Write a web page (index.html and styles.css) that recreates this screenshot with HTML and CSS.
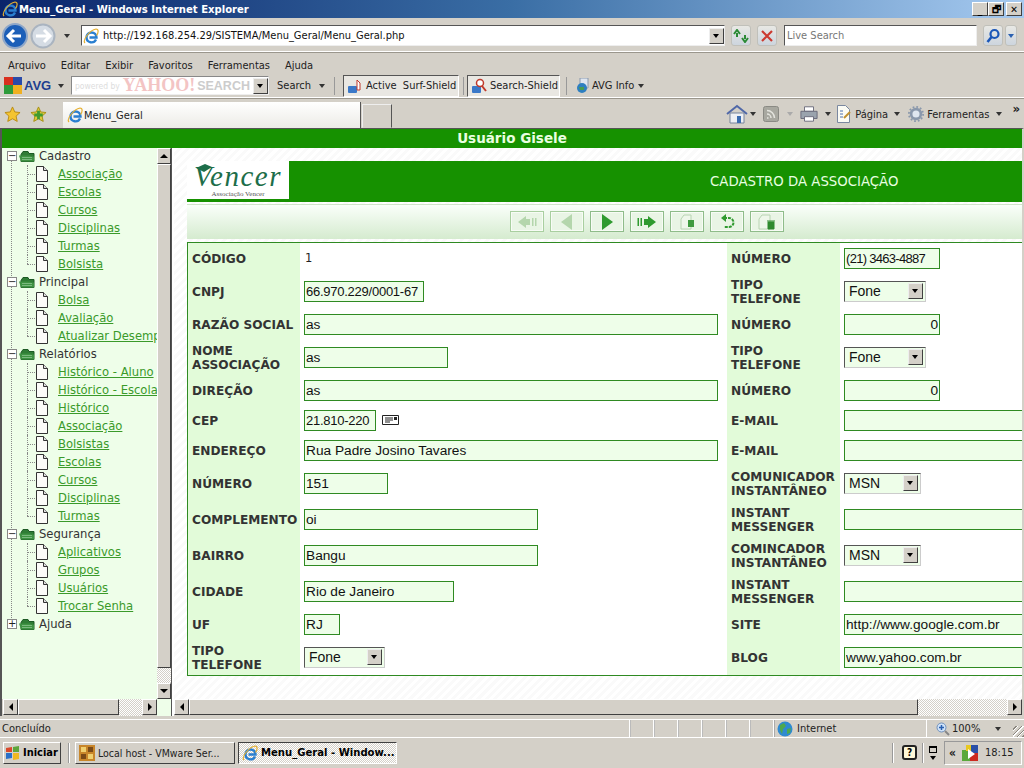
FILE: index.html
```html
<!DOCTYPE html>
<html lang="pt-BR">
<head>
<meta charset="utf-8">
<title>Menu_Geral - Windows Internet Explorer</title>
<link rel="stylesheet" href="styles.css">
</head>
<body>
<svg width="0" height="0" class="defs">
  <defs>
    <symbol id="ie" viewBox="0 0 16 16"><path d="M3.500 9.500a5 5 0 0 1 10 0h-7M3.500 9.500a5 5 0 0 0 9.500 2" fill="none" stroke="#2a7fd0" stroke-width="2.400"/><path d="M2 15C-1 12 7 2 13 1c3 0 2.500 4 .5 6.500" fill="none" stroke="#e6b030" stroke-width="1.200"/></symbol>
    <symbol id="page" viewBox="0 0 14 16"><path d="M1.500.5h7l4 4v11h-11z" fill="#fbfbf8" stroke="#333"/><path d="M8.500.5v4h4" fill="#ddd" stroke="#333"/></symbol>
    <symbol id="folder" viewBox="0 0 16 12"><path d="M4 1h5l1 2h5v8H2V4z" fill="#2f7c35" stroke="#1d5a25"/><path d="M0 5h11l1 1h3v5H2z" fill="#3f9243"/><path d="M3 7h10M3 9h10" stroke="#7ab97e"/></symbol>
  </defs>
</svg>
<div class="window">
  <header class="titlebar">
    <svg class="ico16"><use href="#ie"/></svg>
    <span class="title-text">Menu_Geral - Windows Internet Explorer</span>
    <span class="winbtns">
      <span class="winbtn">_</span><span class="winbtn">🗗</span><span class="winbtn">✕</span>
    </span>
  </header>

  <div class="addrrow">
    <svg class="navbtns" width="58" height="30" viewBox="0 0 58 30">
      <circle cx="14" cy="15" r="12" fill="#1c5fb8" stroke="#8fa7c8" stroke-width="2"/>
      <path d="M20 15H8m5-6-6 6 6 6" fill="none" stroke="#fff" stroke-width="3"/>
      <circle cx="42" cy="15" r="11.500" fill="#d5dce4" stroke="#aab4c0" stroke-width="2"/>
      <path d="M35 15h13m-5-6 6 6-6 6" fill="none" stroke="#fff" stroke-width="3"/>
    </svg>
    <span class="dn-arrow"></span>
    <div class="addrbox">
      <svg class="ico16"><use href="#ie"/></svg>
      <span class="url">http://192.168.254.29/SISTEMA/Menu_Geral/Menu_Geral.php</span>
      <span class="combo-btn"></span>
    </div>
    <span class="glass"><svg width="16" height="14" viewBox="0 0 16 14"><path d="M7 5 4 1 1 5m3-1v4" fill="none" stroke="#2a8a35" stroke-width="2"/><path d="M9 9l3 4 3-4m-3 1V6" fill="none" stroke="#2a8a35" stroke-width="2"/></svg></span>
    <span class="glass"><svg width="12" height="12" viewBox="0 0 12 12"><path d="M1 1l10 10M11 1 1 11" stroke="#cc3a30" stroke-width="2.200"/></svg></span>
    <div class="searchbox">Live Search</div>
    <span class="glass glass-search"><svg width="16" height="16" viewBox="0 0 16 16"><circle cx="9.500" cy="6" r="4" fill="none" stroke="#1a56b8" stroke-width="2.200"/><path d="M6.500 9 2.500 14" stroke="#1a56b8" stroke-width="2.600"/></svg></span>
    <span class="glass glass-drop"><span class="dn-arrow dn-blue"></span></span>
  </div>

  <nav class="menubar">
    <span>Arquivo</span><span>Editar</span><span>Exibir</span><span>Favoritos</span><span>Ferramentas</span><span>Ajuda</span>
  </nav>

  <div class="avgbar">
    <svg width="18" height="17" viewBox="0 0 18 17" class="avg-logo"><path d="M0 0h9v8H0z" fill="#d9301f"/><path d="M9 0h9v8H9z" fill="#2a4aa8"/><path d="M0 8h9v9H0z" fill="#2f9b3a"/><path d="M9 8h9v9H9z" fill="#f0b020"/></svg>
    <span class="avg-word">AVG</span>
    <span class="dn-arrow"></span>
    <div class="yahoo"><span class="yh-pw">powered by</span><span class="yh-big">YAHOO!</span><span class="yh-s">SEARCH</span><span class="combo-btn"></span></div>
    <span class="avg-t avg-search">Search</span><span class="dn-arrow dn-search"></span>
    <span class="sep-v sep-a"></span>
    <span class="shield shield-a"><svg width="16" height="16" viewBox="0 0 16 16"><rect x="1" y="8" width="9" height="7" rx="1" fill="#3a78c8"/><path d="M10 12V2l3 3v7z" fill="#fff" stroke="#c0392b"/></svg>Active&nbsp; Surf-Shield</span>
    <span class="sep-v sep-b"></span>
    <span class="shield shield-b"><svg width="16" height="16" viewBox="0 0 16 16"><rect x="1" y="8" width="9" height="7" rx="1" fill="#3a78c8"/><circle cx="9" cy="5" r="3.500" fill="#fff" stroke="#c0392b" stroke-width="1.500"/><path d="M11 8l4 5" stroke="#c0392b" stroke-width="2"/></svg>Search-Shield</span>
    <span class="sep-v sep-c"></span>
    <svg width="14" height="16" viewBox="0 0 14 16" class="avg-info"><path d="M4 0h8v10H4z" fill="#dfe6f0" stroke="#8a98ac"/><circle cx="6" cy="10" r="5" fill="#2e7fc0"/><path d="M3 9h5v3H4z" fill="#4a9c50"/></svg>
    <span class="avg-t avg-info-t">AVG Info</span><span class="dn-arrow"></span>
  </div>

  <div class="tabrow">
    <svg width="17" height="17" viewBox="0 0 18 18" class="fav"><path d="M9 1l2.400 5.300 5.600.6-4.200 3.800 1.200 5.600L9 13.500l-5 2.800 1.200-5.600L1 6.900l5.600-.6z" fill="#f4c430" stroke="#b98a10"/></svg>
    <svg width="17" height="17" viewBox="0 0 18 18" class="fav fav2"><path d="M9 1l2.400 5.300 5.600.6-4.200 3.800 1.200 5.600L9 13.500l-5 2.800 1.200-5.600L1 6.900l5.600-.6z" fill="#dfc93c" stroke="#a58e10"/><path d="M9 5v9M4.500 9.500h9" stroke="#3f9a2f" stroke-width="3"/></svg>
    <div class="tab"><svg class="ico16"><use href="#ie"/></svg><span>Menu_Geral</span></div>
    <div class="tab-new"></div>
    <div class="cmdbar">
      <svg width="22" height="20" viewBox="0 0 22 20"><path d="M1 10 11 2l10 8" fill="none" stroke="#5068a8" stroke-width="2"/><path d="M4 9h14v10H4z" fill="#eef0f4" stroke="#76849c"/><path d="M11 12h4v7h-4z" fill="#3a6cb0"/></svg>
      <span class="dn-arrow a1"></span>
      <svg class="c-rss" width="16" height="16" viewBox="0 0 16 16"><rect x=".5" y=".5" width="15" height="15" rx="2" fill="#a8a8a0" stroke="#8a8a84"/><path d="M4 12h1.500M4 8a4 4 0 0 1 4 4M4 4.500A7.500 7.500 0 0 1 11.500 12" fill="none" stroke="#e4e4de" stroke-width="1.500"/></svg>
      <span class="dn-arrow dn-dim a2"></span>
      <svg class="c-print" width="18" height="18" viewBox="0 0 20 18"><path d="M5 1h10v5H5z" fill="#fff" stroke="#667"/><path d="M1 6h18v8H1z" fill="#9aa3ad" stroke="#667"/><path d="M5 12h10v5H5z" fill="#fff" stroke="#667"/></svg>
      <span class="dn-arrow a3"></span>
      <svg class="c-doc" width="16" height="18" viewBox="0 0 16 18"><path d="M1.500.5h8l4 4v13h-12z" fill="#fbfbf4" stroke="#7a88a0"/><path d="M4 6h3M4 9h3M4 12h3" stroke="#4d70b0"/><path d="M8 13l6-6" stroke="#c09030" stroke-width="2"/></svg>
      <span class="cmd-t">Página</span><span class="dn-arrow a4"></span>
      <svg class="c-gear" width="16" height="16" viewBox="0 0 18 18"><circle cx="9" cy="9" r="5.500" fill="#dfe6f0" stroke="#8a98ac" stroke-width="3"/><circle cx="9" cy="9" r="8" fill="none" stroke="#8a98ac" stroke-width="2" stroke-dasharray="2 2.200"/></svg>
      <span class="cmd-t">Ferramentas</span><span class="dn-arrow a5"></span>
      <span class="chev">»</span>
    </div>
  </div>

  <main class="page">
    <div class="banner-user">Usuário Gisele</div>
    <div class="frames">
      <aside class="treeframe">
        <div class="treeview">
          <div class="tree">
            <div class="node"><span class="pm">−</span><svg class="folder"><use href="#folder"/></svg><span>Cadastro</span></div>
            <div class="sub">
              <a class="leaf"><svg class="doc"><use href="#page"/></svg><span>Associação</span></a>
              <a class="leaf"><svg class="doc"><use href="#page"/></svg><span>Escolas</span></a>
              <a class="leaf"><svg class="doc"><use href="#page"/></svg><span>Cursos</span></a>
              <a class="leaf"><svg class="doc"><use href="#page"/></svg><span>Disciplinas</span></a>
              <a class="leaf"><svg class="doc"><use href="#page"/></svg><span>Turmas</span></a>
              <a class="leaf"><svg class="doc"><use href="#page"/></svg><span>Bolsista</span></a>
            </div>
            <div class="node"><span class="pm">−</span><svg class="folder"><use href="#folder"/></svg><span>Principal</span></div>
            <div class="sub">
              <a class="leaf"><svg class="doc"><use href="#page"/></svg><span>Bolsa</span></a>
              <a class="leaf"><svg class="doc"><use href="#page"/></svg><span>Avaliação</span></a>
              <a class="leaf"><svg class="doc"><use href="#page"/></svg><span>Atualizar Desempenho</span></a>
            </div>
            <div class="node"><span class="pm">−</span><svg class="folder"><use href="#folder"/></svg><span>Relatórios</span></div>
            <div class="sub">
              <a class="leaf"><svg class="doc"><use href="#page"/></svg><span>Histórico - Aluno</span></a>
              <a class="leaf"><svg class="doc"><use href="#page"/></svg><span>Histórico - Escola</span></a>
              <a class="leaf"><svg class="doc"><use href="#page"/></svg><span>Histórico</span></a>
              <a class="leaf"><svg class="doc"><use href="#page"/></svg><span>Associação</span></a>
              <a class="leaf"><svg class="doc"><use href="#page"/></svg><span>Bolsistas</span></a>
              <a class="leaf"><svg class="doc"><use href="#page"/></svg><span>Escolas</span></a>
              <a class="leaf"><svg class="doc"><use href="#page"/></svg><span>Cursos</span></a>
              <a class="leaf"><svg class="doc"><use href="#page"/></svg><span>Disciplinas</span></a>
              <a class="leaf"><svg class="doc"><use href="#page"/></svg><span>Turmas</span></a>
            </div>
            <div class="node"><span class="pm">−</span><svg class="folder"><use href="#folder"/></svg><span>Segurança</span></div>
            <div class="sub">
              <a class="leaf"><svg class="doc"><use href="#page"/></svg><span>Aplicativos</span></a>
              <a class="leaf"><svg class="doc"><use href="#page"/></svg><span>Grupos</span></a>
              <a class="leaf"><svg class="doc"><use href="#page"/></svg><span>Usuários</span></a>
              <a class="leaf"><svg class="doc"><use href="#page"/></svg><span>Trocar Senha</span></a>
            </div>
            <div class="node"><span class="pm">+</span><svg class="folder"><use href="#folder"/></svg><span>Ajuda</span></div>
          </div>
          <div class="vscroll">
            <span class="sb-btn"><span class="tri tri-up"></span></span>
            <span class="sb-thumb"></span>
            <span class="sb-track"></span>
            <span class="sb-btn"><span class="tri tri-down"></span></span>
          </div>
        </div>
        <div class="hscroll hscroll-left">
          <span class="sb-btn"><span class="tri tri-left"></span></span>
          <span class="hthumb hthumb-left"></span>
          <span class="sb-track"></span>
          <span class="sb-btn"><span class="tri tri-right"></span></span>
        </div>
      </aside>

      <section class="mainframe">
        <div class="mainview">
          <div class="headbar">
            <div class="logo">
              <svg class="logo-hat" width="16" height="9" viewBox="0 0 16 9"><path d="M0 4 9 0l7 3-8 5z" fill="#1d6e4a"/></svg>
              <span class="logo-word">Vencer</span><span class="logo-sub">Associação Vencer</span>
            </div>
            <div class="head-title">CADASTRO DA ASSOCIAÇÃO</div>
          </div>
          <div class="toolbar">
            <button class="tb dim"><svg width="20" height="14" viewBox="0 0 20 14"><path d="M1 7l8-6v3h4v6H9v3z" fill="#b4d6ac"/><path d="M15 3h1.500v8H15zM18 3h1.500v8H18z" fill="#b4d6ac"/></svg></button>
            <button class="tb dim"><svg width="14" height="16" viewBox="0 0 14 16"><path d="M12 0v16L1 8z" fill="#b4d6ac"/></svg></button>
            <button class="tb"><svg width="14" height="16" viewBox="0 0 14 16"><path d="M2 0v16l11-8z" fill="#2f9a2f"/></svg></button>
            <button class="tb"><svg width="20" height="14" viewBox="0 0 20 14"><path d="M.5 3H2v8H.5zM3.500 3H5v8H3.500z" fill="#2f9a2f"/><path d="M19 7l-8-6v3H7v6h4v3z" fill="#2f9a2f"/></svg></button>
            <button class="tb"><svg width="20" height="16" viewBox="0 0 20 16"><path d="M4 5l3-4h7v14H4z" fill="#eef7ea" stroke="#b8d4b2"/><path d="M11 6h6v7h-6z" fill="#3f9a3f"/></svg></button>
            <button class="tb"><svg width="16" height="16" viewBox="0 0 16 16"><path d="M5 4h5a4 4 0 0 1 0 9H5" fill="none" stroke="#2f9a2f" stroke-width="2" stroke-dasharray="3 1"/><path d="M7 0v8L2 4z" fill="#2f9a2f"/></svg></button>
            <button class="tb"><svg width="22" height="16" viewBox="0 0 22 16"><path d="M3 5l3-4h8v14H3z" fill="#eef7ea" stroke="#b8d4b2"/><path d="M11 7h8M12 8h6v7h-6z" fill="#2f8a2f" stroke="#2f8a2f"/></svg></button>
          </div>
          <div class="form">
            <div class="lbl">CÓDIGO</div><div class="val plain">1</div><div class="lbl">NÚMERO</div><div class="val"><input class="inp w96 tight" value="(21) 3463-4887"></div>
            <div class="lbl">CNPJ</div><div class="val"><input class="inp w120 num" value="66.970.229/0001-67"></div><div class="lbl">TIPO<br>TELEFONE</div><div class="val"><span class="sel sel-s"><span>Fone</span><span class="combo-btn"></span></span></div>
            <div class="lbl">RAZÃO SOCIAL</div><div class="val"><input class="inp w414" value="as"></div><div class="lbl">NÚMERO</div><div class="val"><input class="inp w96 right" value="0"></div>
            <div class="lbl">NOME<br>ASSOCIAÇÃO</div><div class="val"><input class="inp w144" value="as"></div><div class="lbl">TIPO<br>TELEFONE</div><div class="val"><span class="sel sel-s"><span>Fone</span><span class="combo-btn"></span></span></div>
            <div class="lbl">DIREÇÃO</div><div class="val"><input class="inp w414" value="as"></div><div class="lbl">NÚMERO</div><div class="val"><input class="inp w96 right" value="0"></div>
            <div class="lbl">CEP</div><div class="val"><input class="inp w72 num" value="21.810-220"><svg class="cep" width="18" height="12" viewBox="0 0 18 12"><path d="M.5 1.500h16v9H.5z" fill="#fff" stroke="#222"/><path d="M3 4h8M3 6h8M3 8h5" stroke="#222"/><path d="M12 3h3v3h-3z" fill="#222"/></svg></div><div class="lbl">E-MAIL</div><div class="val"><input class="inp w-long" value=""></div>
            <div class="lbl">ENDEREÇO</div><div class="val"><input class="inp w414" value="Rua Padre Josino Tavares"></div><div class="lbl">E-MAIL</div><div class="val"><input class="inp w-long" value=""></div>
            <div class="lbl">NÚMERO</div><div class="val"><input class="inp w84" value="151"></div><div class="lbl">COMUNICADOR<br>INSTANTÂNEO</div><div class="val"><span class="sel sel-m"><span>MSN</span><span class="combo-btn"></span></span></div>
            <div class="lbl">COMPLEMENTO</div><div class="val"><input class="inp w234" value="oi"></div><div class="lbl">INSTANT<br>MESSENGER</div><div class="val"><input class="inp w-long" value=""></div>
            <div class="lbl">BAIRRO</div><div class="val"><input class="inp w234" value="Bangu"></div><div class="lbl">COMINCADOR<br>INSTANTÂNEO</div><div class="val"><span class="sel sel-m"><span>MSN</span><span class="combo-btn"></span></span></div>
            <div class="lbl">CIDADE</div><div class="val"><input class="inp w150" value="Rio de Janeiro"></div><div class="lbl">INSTANT<br>MESSENGER</div><div class="val"><input class="inp w-long" value=""></div>
            <div class="lbl">UF</div><div class="val"><input class="inp w36" value="RJ"></div><div class="lbl">SITE</div><div class="val"><input class="inp w-long" value="http://www.google.com.br"></div>
            <div class="lbl">TIPO<br>TELEFONE</div><div class="val"><span class="sel sel-l"><span>Fone</span><span class="combo-btn"></span></span></div><div class="lbl">BLOG</div><div class="val"><input class="inp w-long" value="www.yahoo.com.br"></div>
          </div>
        </div>
        <div class="hscroll hscroll-main">
          <span class="sb-btn"><span class="tri tri-left"></span></span>
          <span class="hthumb hthumb-main"></span>
          <span class="sb-track"></span>
          <span class="sb-btn"><span class="tri tri-right"></span></span>
        </div>
      </section>
    </div>
  </main>

  <footer class="statusbar">
    <span class="st-text">Concluído</span>
    <span class="st-cell"></span><span class="st-cell"></span><span class="st-cell"></span><span class="st-cell"></span><span class="st-cell"></span><span class="st-cell"></span>
    <span class="st-zone"><svg width="16" height="16" viewBox="0 0 16 16"><circle cx="8" cy="8" r="7.500" fill="#2e8ad0"/><path d="M3 4l4-2 2 3-3 3-1 5-2-4zM10 8l4-1-1 5-3 1z" fill="#4ea84e"/></svg>Internet</span>
    <span class="st-zoom"><svg width="14" height="14" viewBox="0 0 14 14"><circle cx="5.500" cy="5.500" r="4.500" fill="#cfe2f8" stroke="#6f90bc"/><path d="M3 5.500h5M5.500 3v5" stroke="#2a60b0" stroke-width="1.500"/><path d="M9 9l4 4" stroke="#888" stroke-width="2"/></svg>100%<span class="dn-arrow"></span><span class="grip"></span></span>
  </footer>

  <div class="taskbar">
    <button class="start"><svg width="16" height="14" viewBox="0 0 16 14"><path d="M1 2l6-1v5H1z" fill="#d9482b"/><path d="M8 1l6-1v6H8z" fill="#5da63b"/><path d="M1 7h6v5l-6 1z" fill="#2a70c8"/><path d="M8 7h6v6l-6 1z" fill="#f0b820"/></svg>Iniciar</button>
    <span class="tk-sep"></span>
    <div class="task"><svg width="16" height="16" viewBox="0 0 16 16"><path d="M0 0h16v16H0z" fill="#c8862a"/><path d="M2 2h5v5H2zM9 9h5v5H9z" fill="#f0d070"/><path d="M9 2h5v5H9zM2 9h5v5H2z" fill="#7a4a18"/></svg><span>Local host - VMware Ser...</span></div>
    <div class="task active"><svg class="ico16"><use href="#ie"/></svg><span>Menu_Geral - Window...</span></div>
    <div class="tray">
      <span class="tk-sep tk-sep1"></span>
      <span class="help">?</span>
      <span class="tk-sep tk-sep2"></span>
      <span class="restore"><span class="mini-win"></span><span class="dn-arrow dn-black"></span></span>
      <div class="clockbox">
        <span class="ll">«</span>
        <svg width="16" height="16" viewBox="0 0 16 16"><path d="M0 5h8v11H0z" fill="#5aa83a"/><path d="M4 0h5v6H4z" fill="#e8c820"/><path d="M9 0h7v8H9z" fill="#2a50a8"/><path d="M8 8h8v8H8z" fill="#cc2a20"/><path d="M6 4l7 5-7 5z" fill="#fff"/></svg>
        <span class="clock">18:15</span>
      </div>
    </div>
  </div>
</div>
</body>
</html>
```
FILE: styles.css
```css
* { box-sizing: border-box; }
html, body { margin: 0; height: 100%; overflow: hidden; }
body { font-family: "DejaVu Sans", sans-serif; background: #d4d0c8; }
.defs { position: absolute; }
svg { flex: none; display: block; }
.ico16 { width: 16px; height: 16px; flex: none; }
.window { width: 1024px; height: 768px; display: flex; flex-direction: column; color: #222; overflow: hidden; font-stretch: condensed; font-size: 11px; white-space: nowrap; }

.titlebar { height: 18px; display: flex; align-items: center; padding: 0 2px; gap: 1px; background: linear-gradient(90deg, #0a246a 0%, #3a6ea5 50%, #a6caf0 100%); color: #fff; font-weight: 700; font-size: 11.200px; }
.winbtns { margin-left: auto; display: flex; gap: 0; }
.winbtn { width: 16px; height: 14px; background: #d4d0c8; color: #000; font-size: 10px; line-height: 13px; text-align: center; border: 1px solid; border-color: #fff #404040 #404040 #fff; }
.winbtn:last-child { margin-left: 2px; }

.addrrow { height: 34px; display: flex; align-items: center; padding: 2px 0 0 1px; border-bottom: 1px solid #fff; box-shadow: 0 1px 0 #9a968c; }
.navbtns { margin-right: 2px; }
.dn-arrow { display: inline-block; flex: none; width: 0; height: 0; border: 3px solid transparent; border-top: 4px solid #333; border-bottom: 0; margin-left: 3px; }
.dn-blue { border-top-color: #2a60b0; margin: 0; }
.dn-dim { border-top-color: #aaa; }
.dn-black { border-top-color: #000; margin: 0; }
.addrbox { margin-left: 11px; width: 644px; height: 21px; background: #fff; border: 1px solid; border-color: #555 #eee #eee #555; display: flex; align-items: center; padding-left: 1px; gap: 4px; font-size: 11px; color: #111; }
.url { flex: 1; }
.combo-btn { margin-left: auto; width: 15px; height: 16px; background: #d4d0c8; border: 1px solid; border-color: #eee #404040 #404040 #eee; position: relative; flex: none; }
.combo-btn::after { content: ""; position: absolute; left: 3px; top: 5px; border: 3.500px solid transparent; border-top: 4px solid #000; border-bottom: 0; }
.glass { width: 20px; height: 21px; margin-left: 6px; background: linear-gradient(#e8e8e4, #cdd5de); border: 1px solid #c0c0ba; border-radius: 3px; display: flex; align-items: center; justify-content: center; }
.searchbox { margin-left: 7px; width: 193px; height: 21px; background: #fff; border: 1px solid; border-color: #555 #eee #eee #555; padding-left: 2px; line-height: 19px; color: #777; font-size: 11px; }
.glass.glass-search { margin-left: 6px; }
.glass.glass-drop { width: 12px; margin-left: 2px; }

.menubar { height: 18px; margin-top: 4px; display: flex; align-items: center; gap: 15px; padding-left: 8px; font-size: 11px; }

.avgbar { height: 24px; display: flex; align-items: center; padding-left: 4px; border-bottom: 1px solid #fff; box-shadow: 0 1px 0 #9a968c; }
.avg-word { font-weight: 700; font-size: 13px; width: 30px; color: #1f3f8f; margin-left: 2px; font-family: "Liberation Sans", sans-serif; }
.avgbar > .dn-arrow { margin-left: 4px; }
.yahoo { margin-left: 7px; width: 198px; height: 19px; background: #fff; border: 1px solid; border-color: #888 #eee #eee #888; display: flex; align-items: center; padding-left: 3px; overflow: hidden; }
.yh-pw { color: #ddd; font-size: 8.500px; }
.yh-big { color: #f3c4c4; font-weight: 700; font-size: 18px; margin-left: 3px; font-family: "Liberation Serif", serif; }
.yh-s { color: #ccc; font-weight: 700; font-size: 12.500px; margin-left: 2px; font-family: "Liberation Sans", sans-serif; }
.avg-t { font-size: 11px; }
.avg-search { margin-left: 8px; }
.avgbar > .dn-search { margin-left: 8px; }
.sep-v { width: 1px; height: 18px; background: #999; flex: none; }
.sep-a { margin: 0 8px 0 9px; }
.sep-b { margin: 0 3px 0 4px; }
.sep-c { margin: 0 9px 0 6px; }
.shield { height: 22px; display: flex; align-items: center; gap: 3px; padding: 0 3px; background: #e9e7e2; border: 1px solid; border-color: #555 #fff #fff #555; font-size: 11px; }
.shield-a { width: 116px; }
.shield-b { width: 93px; }
.avg-info-t { margin-left: 2px; }

.tabrow { height: 28px; margin-top: 2px; display: flex; align-items: flex-end; padding-left: 4px; position: relative; }
.fav { align-self: center; }
.fav2 { margin-left: 9px; }
.tab { margin-left: 16px; width: 298px; height: 26px; background: linear-gradient(#fff, #ecebe6); border-right: 1px solid #555; display: flex; align-items: center; gap: 1px; padding-left: 4px; font-size: 11px; }
.tab-new { margin-left: 1px; width: 30px; height: 24px; background: #d4d0c8; border: 1px solid; border-color: #eee #555 transparent #eee; }
.cmdbar { margin-left: auto; align-self: center; display: flex; align-items: center; padding-right: 4px; font-size: 11px; position: relative; }
.cmdbar .a1 { margin-left: 2px; }
.c-rss { margin-left: 7px; }
.cmdbar .a2 { margin-left: 8px; }
.c-print { margin-left: 7px; }
.cmdbar .a3 { margin-left: 7px; }
.c-doc { margin-left: 5px; }
.cmd-t { margin-left: 3px; }
.cmdbar .a4 { margin-left: 6px; }
.c-gear { margin-left: 8px; }
.cmdbar .a5 { margin-left: 7px; }
.chev { font-size: 13px; margin-left: 10px; line-height: 10px; align-self: flex-start; font-weight: 700; }

.page { height: 588px; display: flex; flex-direction: column; background: #fff; border-top: 1px solid #555; border-left: 2px solid #555; border-right: 2px solid #d4d0c8; }
.banner-user { height: 19px; flex: none; background: #169100; color: #eaffe0; font-weight: 700; font-size: 13.500px; line-height: 19px; text-align: center; font-stretch: normal; }
.frames { flex: 1; display: flex; min-height: 0; font-stretch: normal; }

.treeframe { width: 170px; flex: none; display: flex; flex-direction: column; background: #eefee9; border-right: 1px solid #555; }
.treeview { flex: 1; display: flex; min-height: 0; }
.tree { width: 155px; flex: none; overflow: hidden; padding: 0 0 0 5px; font-size: 11.600px; }
.tree > .node:first-child { margin-top: -1px; }
.node { height: 18px; display: flex; align-items: center; color: #333; }
.pm { width: 10px; height: 10px; border: 1px solid #888; font-size: 10px; line-height: 7px; text-align: center; color: #222; background: #fff; flex: none; position: relative; z-index: 1; }
.folder { width: 16px; height: 13px; margin-left: 2px; margin-right: 4px; }
.sub { padding-left: 28px; position: relative; }
.sub::before { content: ""; position: absolute; left: 4px; top: -5px; bottom: -5px; border-left: 1px dotted #888; }
.leaf { height: 18px; display: flex; align-items: center; gap: 9px; color: #3a9a2a; position: relative; }
.leaf::before { content: ""; position: absolute; left: -8px; top: 9px; width: 8px; border-top: 1px dotted #888; }
.leaf::after { content: ""; position: absolute; left: -8px; top: 0; height: 18px; border-left: 1px dotted #888; }
.leaf:last-child::after { height: 9px; }
.leaf span { text-decoration: underline; }
.doc { width: 14px; height: 16px; }

.vscroll { width: 14px; flex: none; display: flex; flex-direction: column; background: #d4d0c8; }
.vscroll .sb-btn { width: 14px; }
.sb-btn { width: 15px; height: 16px; flex: none; background: #d4d0c8; border: 1px solid; border-color: #fff #404040 #404040 #fff; display: flex; align-items: center; justify-content: center; }
.sb-thumb { height: 504px; flex: none; background: #d4d0c8; border: 1px solid; border-color: #fff #404040 #404040 #fff; }
.sb-track { flex: 1; background: repeating-conic-gradient(#d4d0c8 0 25%, #fff 0 50%) 0 0 / 2px 2px; }
.tri { width: 0; height: 0; border: 4px solid transparent; }
.tri-up { border-bottom-color: #000; border-top: 0; }
.tri-down { border-top-color: #000; border-bottom: 0; }
.tri-left { border-right-color: #000; border-left: 0; }
.tri-right { border-left-color: #000; border-right: 0; }

.hscroll { height: 17px; flex: none; display: flex; background: #d4d0c8; }
.hscroll-left { width: 155px; padding-left: 1px; }
.hthumb { flex: none; height: 16px; background: #d4d0c8; border: 1px solid; border-color: #fff #404040 #404040 #fff; }
.hthumb-left { width: 101px; }
.hthumb-main { width: 729px; }

.mainframe { flex: 1; min-width: 0; display: flex; flex-direction: column; background: #fff; border-left: 2px solid #fff; }
.mainview { flex: 1; min-height: 0; overflow: hidden; padding: 13px 0 0 13px; background: repeating-linear-gradient(135deg, #fff 0 3px, #fafafa 3px 6px); }
.headbar { height: 41px; width: 880px; display: flex; background: #169100; }
.logo { width: 102px; height: 38px; flex: none; background: #fff; display: flex; flex-direction: column; align-items: center; padding-top: 2px; color: #1d6e4a; font-family: "Liberation Serif", serif; font-style: italic; line-height: 1; position: relative; }
.logo-hat { position: absolute; left: 9px; top: 3px; }
.logo-word { font-size: 29px; letter-spacing: 1.500px; line-height: 27px; }
.logo-sub { font-size: 7px; line-height: 8px; color: #555; font-style: normal; }
.head-title { flex: 1; padding-left: 421px; color: #e8ffe0; font-size: 13.300px; line-height: 41px; }
.toolbar { margin-top: 2px; height: 35px; width: 880px; padding: 6px 0 0 323px; border-top: 1px solid #cfe4c8; display: flex; gap: 6px; background: linear-gradient(#fafffa, #d5ebcf); }
.tb { width: 34px; height: 21px; padding: 0; border: 1px solid #8fbc8a; background: #e9f5e5; box-shadow: inset 0 0 0 1px #f7fcf5; display: flex; align-items: center; justify-content: center; }
.tb.dim { border-color: #a9cfa0; }

.form { margin-top: 3px; width: 880px; display: grid; grid-template-columns: 112px 427px 113px 1fr; border: 1px solid #2f8a22; border-width: 1px 0 1px 1px; background: #fff; grid-template-rows: 30px 36px 30px 36px 30px 30px 30px 36px 36px 36px 36px 30px 36px; }
.lbl { background: #e2fbd9; padding: 1px 0 0 4px; font-weight: 700; font-size: 12.150px; line-height: 14px; color: #333; display: flex; align-items: center; font-family: "DejaVu Sans", sans-serif; }
.val { padding-left: 4px; display: flex; align-items: center; }
.plain { font-size: 11.500px; padding-left: 5px; }
.inp { height: 21px; border: 1px solid #2f8a22; background: #eefee9; padding: 0 1px; font: 13.700px "Liberation Sans", sans-serif; color: #111; outline: 0; display: block; }
.num { font-size: 13px; letter-spacing: -.25px; }
.tight { font-size: 13px; letter-spacing: -.7px; }
.right { text-align: right; }
.w36 { width: 36px; } .w72 { width: 72px; } .w84 { width: 84px; } .w96 { width: 96px; } .w120 { width: 120px; } .w144 { width: 144px; } .w150 { width: 150px; } .w234 { width: 234px; } .w414 { width: 414px; } .w-long { width: 200px; }
.cep { margin-left: 6px; }
.sel { height: 21px; display: flex; align-items: center; padding: 0 2px 0 4px; background: #eefee9; border: 1px solid; border-color: #555 #ccc #ccc #555; font: 14px "Liberation Sans", sans-serif; color: #111; }
.sel-s { width: 82px; }
.sel-m { width: 77px; }
.sel-l { width: 81px; }

.statusbar { height: 19px; margin-top: 3px; display: flex; align-items: stretch; border-top: 1px solid #fff; border-bottom: 1px solid #fff; font-size: 11px; line-height: 17px; }
.st-text { width: 630px; padding-left: 2px; border-right: 1px solid #fff; }
.st-cell { width: 24px; border-right: 1px solid #fff; border-left: 1px solid #bbb; }
.st-zone { width: 153px; display: flex; align-items: center; gap: 4px; padding-left: 2px; border-right: 1px solid #fff; border-left: 1px solid #aaa; }
.st-zoom { flex: 1; display: flex; align-items: center; gap: 2px; padding-left: 7px; margin-left: 2px; }
.st-zoom .dn-arrow { margin-left: 13px; }
.grip { width: 11px; height: 11px; margin: auto 0 0 auto; background: repeating-linear-gradient(135deg, transparent 0 2px, #8a867e 2px 3px, #fff 3px 4px); }

.taskbar { flex: 1; display: flex; align-items: center; padding: 0 2px 1px 3px; font-size: 10.500px; background: #d4d0c8; }
.start { width: 58px; height: 22px; padding: 0 0 0 1px; border: 1px solid; border-color: #fff #404040 #404040 #fff; background: #d4d0c8; display: flex; align-items: center; gap: 2px; font: 700 11px "DejaVu Sans", sans-serif; font-stretch: condensed; color: #000; }
.tk-sep { width: 2px; height: 20px; flex: none; margin: 0 5px 0 7px; border-left: 1px solid #999; border-right: 1px solid #fff; }
.task { width: 160px; height: 22px; margin-right: 3px; display: flex; align-items: center; gap: 3px; padding-left: 3px; border: 1px solid; border-color: #fff #404040 #404040 #fff; overflow: hidden; }
.task.active { width: 159px; gap: 3px; padding-left: 3px; font-weight: 700; font-size: 11.200px; color: #000; background: repeating-conic-gradient(#d4d0c8 0 25%, #fff 0 50%) 0 0 / 2px 2px; border-color: #404040 #fff #fff #404040; }
.tray { margin-left: auto; display: flex; align-items: center; }
.tk-sep1 { margin: 0 8px 0 0; }
.help { width: 15px; height: 15px; border: 2px solid #222; border-radius: 3px; background: #fff8d8; font-weight: 700; font-size: 10px; line-height: 11px; text-align: center; color: #000; }
.tk-sep.tk-sep2 { margin: 0 5px; }
.restore { display: flex; flex-direction: column; align-items: center; gap: 3px; margin-right: 7px; }
.mini-win { width: 8px; height: 7px; border: 1px solid #000; border-top-width: 2px; }
.clockbox { width: 78px; height: 24px; display: flex; align-items: center; gap: 6px; padding-left: 4px; border: 1px solid; border-color: #999 #fff #fff #999; }
.ll { font-weight: 700; font-size: 12px; }
.clock { font-size: 11px; margin-left: 1px; }
```
